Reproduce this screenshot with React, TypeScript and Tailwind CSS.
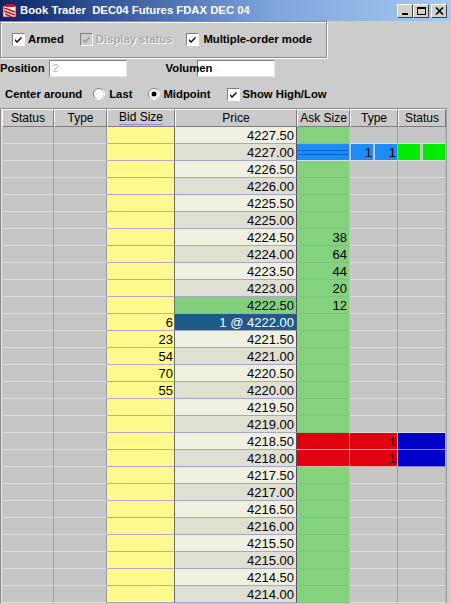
import React from 'react';

type Row = {
  price: string;
  bid?: string;
  ask?: string;
  kind?: 'order' | 'sell' | 'last' | 'mid';
};

const prices: string[] = Array.from({ length: 28 }, (_, i) => (4227.5 - i * 0.5).toFixed(2));

const asks: Record<number, string> = { 6: '38', 7: '64', 8: '44', 9: '20', 10: '12' };
const bids: Record<number, string> = { 11: '6', 12: '23', 13: '54', 14: '70', 15: '55' };

const rows: Row[] = prices.map((p, i) => ({
  price: p,
  ask: asks[i],
  bid: bids[i],
  kind: i === 1 ? 'order' : i === 18 || i === 19 ? 'sell' : i === 10 ? 'last' : i === 11 ? 'mid' : undefined,
}));

const CheckBox = ({ checked = true, disabled = false }: { checked?: boolean; disabled?: boolean }) => (
  <span
    className={`relative block w-[13px] h-[13px] border border-t-[#808080] border-l-[#808080] border-r-white border-b-white ${
      disabled ? 'bg-[#cccccc]' : 'bg-white'
    }`}
  >
    {checked && (
      <svg width="11" height="11" viewBox="0 0 11 11" className="absolute left-0 top-0">
        <path d="M2 5 L4 7 L8.5 2.5 L8.5 4.5 L4 9 L2 7 Z" fill={disabled ? '#9a9a9a' : '#000'} />
      </svg>
    )}
  </span>
);

const Radio = ({ on = false }: { on?: boolean }) => (
  <svg width="12" height="12" viewBox="0 0 12 12" className="block">
    <circle cx="6" cy="6" r="5.5" fill="#fff" stroke="#808080" />
    <path d="M2 10 A5.5 5.5 0 0 0 10 2" fill="none" stroke="#ffffff" />
    {on && <circle cx="6" cy="6" r="2.5" fill="#000" />}
  </svg>
);

const TitleButton = ({ children }: { children: React.ReactNode }) => (
  <div className="w-[16px] h-[14px] bg-[#d4d0c8] border border-t-white border-l-white border-r-[#404040] border-b-[#404040] flex items-center justify-center">
    {children}
  </div>
);

const grayCell = 'bg-[#c6c6c6] border-r border-b border-r-[#9c9c9c] border-b-[#dedede]';

const App: React.FC = () => {
  return (
    <div className="w-[451px] h-[604px] bg-[#cccccc] overflow-hidden font-['Liberation_Sans',Arial,sans-serif] text-black select-none">
      {/* title bar */}
      <div className="h-[21px] flex items-center bg-linear-to-r from-[#0a246a] via-[#7ea4dc] via-60% to-[#a6caf0] pl-[2px] pr-[4px]">
        <svg width="16" height="16" viewBox="0 0 16 16" className="shrink-0">
          <rect x="1" y="3" width="13" height="11" fill="#f4f4f4" stroke="#8a2020" strokeWidth="0.8" />
          <path d="M2 5 L13 9 M2 8 L13 12 M3 11 L10 14" stroke="#d01818" strokeWidth="1.6" />
          <rect x="4" y="1" width="8" height="3" fill="#c81818" />
        </svg>
        <span className="ml-[2px] text-white font-bold text-[11.3px] leading-none whitespace-pre">
          Book Trader  DEC04 Futures FDAX DEC 04
        </span>
        <div className="ml-auto flex items-center">
          <TitleButton>
            <span className="block w-[6px] h-[2px] bg-black mt-[6px] mr-[1px]" />
          </TitleButton>
          <TitleButton>
            <span className="block w-[9px] h-[8px] border border-black border-t-2" />
          </TitleButton>
          <div className="w-[2px]" />
          <TitleButton>
            <svg width="9" height="8" viewBox="0 0 9 8">
              <path d="M1 0.5 L8 7.5 M8 0.5 L1 7.5" stroke="#000" strokeWidth="1.6" />
            </svg>
          </TitleButton>
        </div>
      </div>

      {/* option group */}
      <div className="w-[327px] h-[37px] border border-[#8c8c8c] shadow-[inset_1px_1px_0_#ffffff,1px_1px_0_#ffffff] flex items-center pl-[11px] text-[11.3px] font-bold">
        <CheckBox />
        <span className="ml-[3px]">Armed</span>
        <span className="ml-[16px]">
          <CheckBox disabled />
        </span>
        <span className="ml-[3px] text-[#a8a8a8] [text-shadow:1px_1px_0_#ffffff]">Display status</span>
        <span className="ml-[14px]">
          <CheckBox />
        </span>
        <span className="ml-[4px]">Multiple-order mode</span>
      </div>

      {/* position row */}
      <div className="h-[18px] mt-[1px] flex items-center text-[11.3px] font-bold">
        <span>Position</span>
        <div className="ml-[4px] w-[78px] h-[17px] bg-white border border-t-[#808080] border-l-[#808080] border-r-[#e8e8e8] border-b-[#e8e8e8] flex items-center pl-[3px] font-normal text-[#b8b8b8]">
          2
        </div>
        <span className="ml-[39px] relative z-10">Volumen</span>
        <div className="-ml-[15px] w-[78px] h-[17px] bg-white border border-t-[#808080] border-l-[#808080] border-r-[#e8e8e8] border-b-[#e8e8e8]" />
      </div>

      {/* center around row */}
      <div className="h-[18px] mt-[8px] flex items-center pl-[5px] text-[11.3px] font-bold">
        <span>Center around</span>
        <span className="ml-[11px]">
          <Radio />
        </span>
        <span className="ml-[4px]">Last</span>
        <span className="ml-[16px]">
          <Radio on />
        </span>
        <span className="ml-[3px]">Midpoint</span>
        <span className="ml-[16px]">
          <CheckBox />
        </span>
        <span className="ml-[3px]">Show High/Low</span>
      </div>

      {/* book table */}
      <div className="mt-[5px] flex">
        <div className="w-[2px] border-l border-l-[#8a8a8a] bg-[#e4e4e4]" />
        <div className="w-[444px]">
          <div className="grid grid-cols-[52px_53px_68px_122px_53px_48px_48px] h-[19px] border-t border-t-[#8a8a8a]">
            {['Status', 'Type', 'Bid Size', 'Price', 'Ask Size', 'Type', 'Status'].map((h, i) => (
              <div
                key={i}
                className="bg-[#cacaca] border border-t-white border-l-white border-r-[#7c7c7c] border-b-[#7c7c7c] flex items-center justify-center text-[12px] leading-none"
              >
                <span className={h === 'Bid Size' ? 'border-b border-b-[#8a8ae0] pb-[1px]' : ''}>{h}</span>
              </div>
            ))}
          </div>
          {rows.map((r, i) => {
            const even = i % 2 === 0;
            const priceBg =
              r.kind === 'last'
                ? 'bg-[#82d07e]'
                : r.kind === 'mid'
                ? 'bg-[#1c5a8a] text-white'
                : even
                ? 'bg-[#f0f0e0]'
                : 'bg-[#dfdfd2]';
            return (
              <div key={i} className="grid grid-cols-[52px_53px_68px_122px_53px_48px_48px] h-[17px] text-[13px] leading-none">
                <div className={grayCell} />
                <div className={grayCell} />
                <div className="bg-[#fff98e] border-r border-b border-r-[#6a6a7a] border-b-[#b4a8d0] flex items-center justify-end pr-[1px]">
                  {r.bid}
                </div>
                <div className={`${priceBg} border-r border-b border-r-[#4c4c66] border-b-[#aca4c8] flex items-center justify-end pr-[2px]`}>
                  {r.kind === 'mid' ? `1 @ ${r.price}` : r.price}
                </div>
                {r.kind === 'order' ? (
                  <div className="bg-[#1e8cf8] border-r border-b border-r-[#b8b8d8] border-b-[#dedede] flex flex-col justify-center gap-[3px] px-[1px]">
                    <span className="block h-px bg-[#0a5ad0]" />
                    <span className="block h-px bg-[#0a5ad0]" />
                  </div>
                ) : r.kind === 'sell' ? (
                  <div className="bg-[#e0000e] border-r border-b border-r-[#f08080] border-b-[#f0b0b0]" />
                ) : (
                  <div className="bg-[#84d27e] border-r border-b border-r-[#c0c0c0] border-b-[#7cc878] flex items-center justify-end pr-[2px]">
                    {r.ask}
                  </div>
                )}
                {r.kind === 'order' ? (
                  <div className="grid grid-cols-2 gap-[2px] border-r border-b border-r-[#a8a8a8] border-b-[#dedede] bg-[#c6c6c6] pl-[1px]">
                    <div className="bg-[#1e8cf8] flex items-center justify-end pr-[1px]">1</div>
                    <div className="bg-[#1e8cf8] flex items-center justify-end pr-[1px]">1</div>
                  </div>
                ) : r.kind === 'sell' ? (
                  <div className="bg-[#e0000e] border-r border-b border-r-[#f0b0b0] border-b-[#f0b0b0] flex items-center justify-end pr-[1px] text-[#400000]">
                    1
                  </div>
                ) : (
                  <div className={grayCell} />
                )}
                {r.kind === 'order' ? (
                  <div className="grid grid-cols-2 gap-[3px] border-r border-b border-r-[#c8a8d8] border-b-[#dedede] bg-[#c6c6c6]">
                    <div className="bg-[#00ec00]" />
                    <div className="bg-[#00ec00]" />
                  </div>
                ) : r.kind === 'sell' ? (
                  <div className="bg-[#0000c8] border-r border-b border-r-[#c8a8d8] border-b-[#8080e0]" />
                ) : (
                  <div className="bg-[#c6c6c6] border-r border-b border-r-[#c8a8d8] border-b-[#dedede]" />
                )}
              </div>
            );
          })}
        </div>
        <div className="flex-1 border-l border-l-[#9c9c9c] bg-[#cccccc]" />
      </div>
    </div>
  );
};

export default App;
